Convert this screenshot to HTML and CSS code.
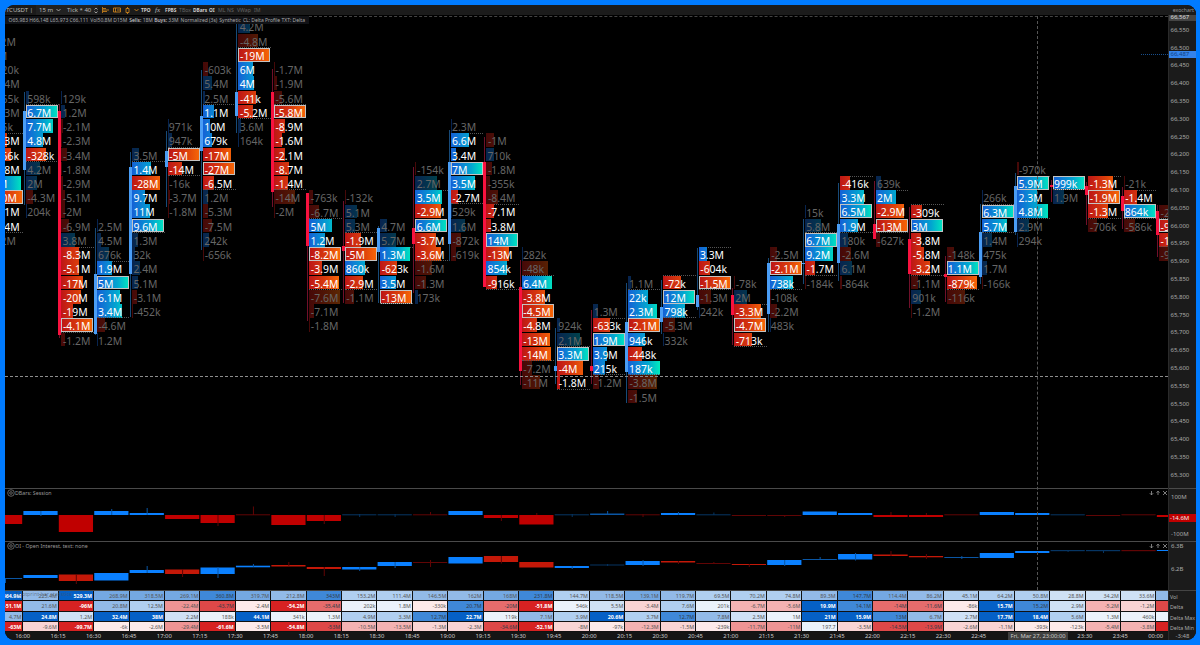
FILE: index.html
```
<!DOCTYPE html>
<html lang="en">
<head>
<meta charset="UTF-8">
<meta name="viewport" content="width=device-width, initial-scale=1.0">
<title>BTCUSDT Footprint</title>
<link rel="stylesheet" href="styles.css">
</head>
<body>
<div class="app">
    <!-- Toolbar -->
    <div class="toolbar">
        <span class="symbol">BTCUSDT |</span>
        <span class="drop">15 m <svg width="5" height="4" viewBox="0 0 5 4"><path d="M.5 1l2 2 2-2" /></svg></span>
        <span class="drop tick">Tick * 40 <svg width="4" height="7" viewBox="0 0 4 7"><path d="M.5 2.5L2 1l1.500 1.500M.5 4.500L2 6l1.500-1.500" /></svg></span>
        <span class="orange"><svg width="8" height="6" viewBox="0 0 8 6"><path d="M.5 0v6M1 1.500h3M1 3h6M1 4.500h4" /></svg></span>
        <span class="orange"><svg width="8" height="6" viewBox="0 0 8 6"><path d="M.5 1h7v4h-7zM2.500 1v4M4 3h3" /></svg></span>
        <span class="orange"><svg width="5" height="7" viewBox="0 0 5 7"><path d="M1 1.500h3v4H1zM2.500 0v1.500M2.500 5.500V7" /></svg></span>
        <span class="orange"><svg width="5" height="4" viewBox="0 0 5 4"><path d="M.5 1l2 2 2-2" /></svg></span>
        <b>TPO</b>
        <i>fx</i>
        <b>FPBS</b>
        <span class="off">TBox</span>
        <b>DBars</b>
        <b>OI</b>
        <span class="off">ML</span>
        <span class="off">NS</span>
        <span class="off">VWap</span>
        <span class="off">IM</span>
        <span class="brand">exochart</span>
    </div>

    <div class="workspace">
        <div class="plot">
            <!-- Footprint chart -->
            <div class="chart">
                <div class="columns" id="columns"></div>
                <div class="info">
                    <span>O65,983 H66,148 L65,973 C66,111</span>
                    <span>Vol50.8M D15M</span>
                    <span><b>Sells:</b> 18M <b>Buys:</b> 33M</span>
                    <span>Normalized (3s)</span>
                    <span>Synthetic</span>
                    <span>CL: Delta Profile TXT: Delta</span>
                </div>
                <div class="level"></div>
                <div class="last-line"></div>
            </div>

            <!-- Indicators -->
            <div class="panel dbars">
                <div class="panel-head">
                    <svg width="8" height="8" viewBox="0 0 8 8"><circle cx="4" cy="4" r="3.300" /><circle cx="4" cy="4" r="1.300" /></svg>
                    <span>DBars: Session</span>
                    <span class="tools"><svg width="18" height="6" viewBox="0 0 18 6"><path d="M2.500 1v4M.8 3.200l1.700 1.700 1.700-1.700M9 5V1M7.500 2.700L9 1.200l1.500 1.500M14 1l4 4M18 1l-4 4" /></svg></span>
                </div>
                <svg class="bars" id="dbars" viewBox="5 489 1163 52"></svg>
            </div>
            <div class="panel oi">
                <div class="panel-head">
                    <svg width="8" height="8" viewBox="0 0 8 8"><circle cx="4" cy="4" r="3.300" /><circle cx="4" cy="4" r="1.300" /></svg>
                    <span>OI - Open Interest, text: none</span>
                    <span class="tools"><svg width="18" height="6" viewBox="0 0 18 6"><path d="M2.500 1v4M.8 3.200l1.700 1.700 1.700-1.700M9 5V1M7.500 2.700L9 1.200l1.500 1.500M14 1l4 4M18 1l-4 4" /></svg></span>
                </div>
                <svg class="bars" id="oi" viewBox="5 542 1163 48"></svg>
            </div>

            <!-- Bar statistics -->
            <div class="stats" id="stats">
                <div class="stats-title">Footprint bar statistics</div>
            </div>
            <div class="times" id="times"></div>
            <div class="crosshair"></div>
            <div class="time-tag">Fri, Mar 27, 23:00:00</div>
        </div>

        <!-- Price axis -->
        <div class="axis">
            <div class="cursor-price">66,567</div>
            <div class="prices" id="prices"></div>
            <div class="last-price">66,487</div>
            <div class="scale scale-dbars">
                <span>100M</span>
                <span class="now">-14.6M</span>
                <span>-100M</span>
            </div>
            <div class="scale scale-oi">
                <span>6.3B</span>
                <span>6.2B</span>
            </div>
            <div class="stat-names">
                <span>Vol</span>
                <span>Delta</span>
                <span>Delta Max</span>
                <span>Delta Min</span>
            </div>
            <div class="countdown">-3:48</div>
        </div>
    </div>
</div>
<script src="script.js"></script>
</body>
</html>
```

FILE: styles.css
```
* {
    box-sizing: border-box;
}
body {
    margin: 0;
    height: 645px;
    padding: 5px 4px 5px 5px;
    background: #007bff;
    font-family: "Noto Sans", "Open Sans", sans-serif;
    overflow: hidden;
}
.app {
    width: 1191px;
    height: 635px;
    border-radius: 9px;
    background: #000;
    overflow: hidden;
    display: flex;
    flex-direction: column;
}
svg {
    fill: none;
    stroke: currentColor;
    stroke-width: 0.8;
    flex: none;
}

/* Toolbar */
.toolbar {
    height: 10px;
    flex: none;
    background: #1b1b1b;
    color: #bbb;
    font-size: 5.2px;
    line-height: 10px;
    white-space: nowrap;
    display: grid;
    grid-template-columns: 31px 27px 35px 11px 12px 9px 11px 14px 10px 14px 14px 16px 9px 9px 10px 17px 10px 1fr;
}
.toolbar > * {
    display: flex;
    align-items: center;
    gap: 3px;
}
.toolbar i {
    font-family: "Liberation Serif", serif;
    font-size: 7px;
}
.symbol {
    font-size: 6px;
    justify-content: flex-end;
    padding-right: 3px;
}
.drop {
    font-size: 6px;
    padding-left: 3px;
    background: #222;
}
.tick {
    padding-left: 4px;
}
.toolbar .orange {
    color: #d98a1c;
    padding-left: 4px;
}
.toolbar .off {
    color: #666;
}
.toolbar b {
    color: #ccc;
    font-size: 4.8px;
}
.toolbar .brand {
    justify-content: flex-end;
    padding-right: 2px;
    color: #999;
}

.workspace {
    display: flex;
    flex: 1;
    min-height: 0;
}
.plot {
    position: relative;
    width: 1163px;
    overflow: hidden;
}

/* Footprint */
.chart {
    position: relative;
    height: 473px;
    overflow: hidden;
}
.columns {
    display: flex;
    margin-left: -14.4px;
}
.column {
    position: relative;
    flex: 0 0 35.42px;
    padding-top: 4.4px;
}
.cell {
    position: relative;
    height: 14.24px;
    width: 32.5px;
    line-height: 17.6px;
    font-size: 10.4px;
    color: #666;
    white-space: nowrap;
}
.cell .bar {
    position: absolute;
    left: 0;
    top: 0;
    bottom: 0.6px;
    background-size: 32px 100%;
    background-repeat: no-repeat;
    opacity: 0.37;
}
.cell span {
    position: relative;
    padding-left: 1.2px;
}
.cell.neg span {
    padding-left: 1.6px;
}
.pos .bar {
    background-image: linear-gradient(90deg, #1560d6, #02a5d0 60%, #00edbd);
}
.neg .bar {
    background-image: linear-gradient(90deg, #bd1616, #d83a0c 50%, #fb6c06);
}
.value {
    color: #fff;
}
.value .bar {
    opacity: 1;
}
.poc .bar {
    border: 1px solid #c3c3c3;
}
.va-top::before, .va-bottom::after {
    content: "";
    position: absolute;
    left: 0;
    right: 0;
    top: -0.5px;
    border-top: 1px dotted #555;
}
.va-bottom::after {
    top: auto;
    bottom: 0;
}
.wick, .body {
    position: absolute;
    left: -2px;
    width: 1px;
    background: #174a78;
}
.body {
    left: -3px;
    width: 3px;
    background: #4a9df5;
}
.down .wick {
    background: #70102a;
}
.down .body {
    background: #f8123f;
}
.info {
    position: absolute;
    left: 0;
    top: 1px;
    width: 304px;
    height: 8px;
    padding: 0 4px 0 3.5px;
    display: flex;
    justify-content: space-between;
    background: #111216;
    color: #aaa;
    font-size: 5px;
    line-height: 8px;
    white-space: nowrap;
}
.info b {
    font-weight: 500;
    color: #ccc;
}
.level {
    position: absolute;
    left: 0;
    right: 0;
    top: 361px;
    border-top: 1px dashed #8d8d8d;
}
.last-line {
    position: absolute;
    right: 0;
    width: 27px;
    top: 39px;
    border-top: 1px dotted #184e8c;
}
.crosshair {
    position: absolute;
    left: 0;
    width: 1033px;
    top: 1px;
    height: 574px;
    border-right: 1px dashed #555;
    pointer-events: none;
}
.chart::after {
    content: "";
    position: absolute;
    left: 304px;
    right: 0;
    top: 1px;
    border-top: 1px dashed #444;
}

/* Indicator panels */
.panel {
    position: relative;
    border-top: 1px solid #4a4a4a;
}
.dbars {
    height: 53px;
}
.oi {
    height: 49px;
}
.panel-head {
    position: absolute;
    left: 2px;
    right: 1px;
    top: 0;
    display: flex;
    align-items: center;
    color: #777;
    font-size: 5.3px;
    line-height: 8px;
}
.panel-head span {
    color: #999;
}
.panel-head .tools {
    margin-left: auto;
}
.panel-head .tools svg {
    display: block;
}
.bars {
    display: block;
    width: 1163px;
    height: 100%;
    stroke: none;
}
.b { fill: #0a80ff; }
.m { fill: #0a56a4; }
.d { fill: #063563; }
.r { fill: #c00000; }
.e { fill: #610505; }
.oi .r { fill: #c41808; }

/* Statistics table */
.stats {
    position: relative;
    border-top: 1px solid #444;
    height: 42px;
}
.stats-title {
    position: absolute;
    z-index: 1;
    left: 11px;
    top: -1px;
    font-size: 5.3px;
    line-height: 9px;
    color: rgba(70, 80, 95, 0.6);
}
.stat-row {
    display: flex;
    height: 10.3px;
    margin-left: -17.1px;
    border-bottom: 1px solid #111;
}
.stat {
    flex: 0 0 35.42px;
    border-right: 1px solid #111;
    padding-right: 1px;
    text-align: right;
    font-size: 5.3px;
    line-height: 11.5px;
    color: #555;
    overflow: hidden;
}
.up0 { background: #ebf2fb; }
.up1 { background: #cfe1f5; }
.up2 { background: #b0cff0; }
.up3 { background: #92bae8; }
.up4 { background: #74a8e2; }
.up5 { background: #3f88d8; }
.up6 { background: #0560c6; }
.dn0 { background: #fdeaea; }
.dn1 { background: #f9d4d4; }
.dn2 { background: #f4b2b2; }
.dn3 { background: #ee9494; }
.dn4 { background: #e66c6c; }
.dn5 { background: #de4848; }
.dn6 { background: #d72222; }
.up5, .dn5, .dn4 { color: #333c48; }
.up6, .dn6 {
    color: #fff;
    font-weight: bold;
}
.times {
    display: flex;
    height: 8px;
    background: #151515;
    color: #ccc;
    font-size: 5.9px;
    line-height: 8px;
}
.times span {
    flex: 0 0 35.42px;
    text-align: center;
}
.time-tag {
    position: absolute;
    left: 1003px;
    bottom: 0;
    width: 60px;
    height: 8px;
    background: #3f3f3f;
    color: #ccc;
    font-size: 5.8px;
    line-height: 8px;
    text-align: center;
}

/* Price axis */
.axis {
    position: relative;
    flex: 1;
    background: #1b1b1b;
    color: #aaa;
    font-size: 6px;
    display: flex;
    flex-direction: column;
    border-left: 1px solid #2a2a2a;
    white-space: nowrap;
    overflow: hidden;
}
.cursor-price {
    height: 6px;
    flex: none;
    line-height: 5px;
    padding-left: 1.5px;
    background: #444;
    color: #ddd;
}
.prices {
    height: 467px;
    flex: none;
    padding-top: 0.8px;
}
.prices span {
    display: block;
    height: 17.8px;
    line-height: 17.8px;
    padding-left: 1.5px;
}
.last-price {
    position: absolute;
    left: 0;
    right: 0;
    top: 36px;
    height: 7px;
    line-height: 7px;
    padding-left: 1.5px;
    background: #3483ea;
    color: #123f80;
}
.scale {
    flex: none;
    border-top: 1px solid #4a4a4a;
    display: flex;
    flex-direction: column;
    line-height: 8px;
}
.scale span {
    padding-left: 2px;
}
.scale-dbars {
    height: 53px;
    padding: 4px 0 3px;
    justify-content: space-between;
}
.scale .now {
    position: relative;
    top: 2.5px;
    padding-left: 1px;
    background: #c00000;
    color: #eee;
}
.scale-oi {
    height: 49px;
    gap: 15px;
}
.stat-names {
    height: 42px;
    flex: none;
    border-top: 1px solid #444;
    display: flex;
    flex-direction: column;
    font-size: 5.3px;
    line-height: 10.3px;
    padding: 1px 0 0 1px;
}
.countdown {
    line-height: 8px;
    text-align: center;
}
```

FILE: script.js
```
const PITCH = 35.42;
const ROW = 14.24;

// first row | value area start, rows | candle: u/d wickTop wickBottom bodyTop bodyBottom | text:width (* marks the POC)
const footprint = [
    '1|8 7|u 15 15 15 15|4.2M:0 5M:0 -320k:0 -7.4M:0 -165k:0 -1.3M:0 -15k:0 -1.3M:16 -166k:20 -1.8M:5 5M:30 *-20M:32 -1.1M:3 -2.4M:3 4.2M:3',
    '5|6 4|u 92 205 111 170|598k:3 *6.7M:32 7.7M:27 4.8M:17 -328k:20 4.2M:14 2M:11 -4.3M:7 204k:.7',
    '5|16 6|d 104 338 111 335|129k:.7 1.2M:4 -2.1M:2 -2.3M:1 -3.4M:6 -1.8M:1 -2.9M:2 -5.1M:4 -2M:4 -6.9M:8 3.8M:14 -8.3M:18 -5.1M:18 -17M:22 -20M:20 -19M:12 *-4.1M:32 -1.2M:4',
    '14|17 4|u 228 335 274 334|2.5M:1 4.5M:4 676k:12 1.9M:15 *5M:32 6.1M:23 3.4M:25 -4.6M:8 1.2M:1',
    '9|10 5|u 152 317 167 274|3.5M:7 1.4M:19 -28M:28 9.7M:13 11M:18 *9.6M:32 1.3M:6 32k:3 2.4M:8 5.1M:6 -3.1M:5 -452k:1',
    '7|9 2|u 131 207 151 167|971k:.5 947k:4 *-5M:32 -14M:14 -16k:1 -3.7M:2 -1.8M:1',
    '3|6 6|u 70 250 116 151|-603k:5 5.4M:9 2.5M:2 1.1M:11 10M:7 679k:9 -17M:28 *-27M:32 -6.5M:11 1.2M:5 -5.3M:5 -7.5M:9 242k:6 -656k:.7',
    '0|2 5|u 22 133 92 116|4.2M:12 -4.8M:20 *-19M:32 6M:15 4M:16 -41k:18 -5.2M:15 3.6M:3 164k:.5',
    '3|6 6|d 69 207 92 192|-1.7M:1 -1.9M:3 -5.6M:8 *-5.8M:32 -8.9M:11 -1.6M:8 -2.1M:11 -8.7M:15 -1.4M:14 -14M:21 -2M:1',
    '12|14 5|d 193 321 193 246|-763k:4 -6.7M:10 5M:23 1.2M:16 *-8.2M:32 -3.9M:13 -5.4M:30 -7.6M:31 -7.1M:5 -1.8M:.5',
    '12|15 4|d 201 303 246 251|-132k:1.5 5.1M:12 5.3M:10 -1.9M:16 *-5M:32 860k:20 -2.9M:18 -1.1M:9',
    '14|16 4|u 226 303 228 252|4.7M:7 5.7M:16 1.3M:30 -623k:17 3.5M:16 *-13M:32',
    '10|12 5|d 167 293 228 244|-154k:.5 2.7M:22 3.5M:27 -2.9M:26 *6.6M:32 -3.7M:21 -3.6M:26 -1.6M:17 -1.3M:11 173k:3',
    '7|8 5|u 130 261 162 244|2.3M:1.5 6.6M:18 3.4M:5 *7M:32 3.5M:24 -2.7M:7 529k:1 1.6M:14 -872k:10 -619k:5',
    '8|13 6|d 137 287 162 287|-1M:8 710k:8 -1.8M:6 -355k:4 -8.4M:12 -7.1M:8 -3.8M:5 *14M:32 -13M:23 854k:21 -916k:11',
    '16|18 6|d 260 385 287 371|282k:.5 -48k:26 6.4M:30 -3.8M:23 *-4.5M:32 -4.8M:15 -13M:28 -14M:29 -7.2M:10 -11M:18',
    '21|23 3|u 328 384 366 371|924k:3 2.1M:23 *3.3M:32 -4M:26 -1.8M:3',
    '20|21 4|d 310 384 366 371|1.3M:5 -633k:17 *1.9M:32 3.9M:14 215k:12 -1.2M:6',
    '18|19 6|u 283 403 322 372|1.1M:3 22k:20 2.3M:29 *-2.1M:32 946k:17 -448k:14 187k:32 -3.8M:29 -1.5M:9',
    '18|18 3|u 280 334 307 322|-72k:18 *12M:32 798k:22 -5.3M:12 332k:.5',
    '16|16 3|u 248 310 295 307|3.3M:8 -604k:11 *-1.5M:32 -1.3M:12 242k:.5',
    '18|20 3|d 288 345 295 315|-78k:.5 2M:13 -3.3M:27 *-4.7M:32 -713k:18',
    '16|17 2|u 258 332 263 314|-2.5M:7 *-2.1M:32 738k:23 -108k:1.5 -2.2M:7 483k:1.5',
    '13|15 3|u 219 284 263 264|15k:.5 5.8M:16 *6.7M:32 9.2M:28 -1.7M:10 -184k:1',
    '11|11 4|u 183 281 224 263|-416k:10 3.3M:24 *6.5M:32 1.9M:18 180k:8 -2.6M:11 6.1M:12 -864k:2',
    '11|12 3|d 181 239 224 239|639k:5 2M:20 -2.9M:28 *-13M:32 -627k:4',
    '13|13 5|d 207 308 239 274|-309k:11 *3M:32 -3.8M:10 -5.8M:13 -3.2M:19 -1.1M:7 901k:10 -1.2M:1',
    '16|17 2|d 256 302 274 277|-148k:7 *1.1M:32 -879k:30 -116k:18',
    '12|13 2|u 204 284 232 277|266k:.5 *6.3M:32 5.7M:25 1.4M:10 475k:.5 1.7M:5 -166k:.7',
    '10|11 3|u 173 235 186 232|-970k:2 *5.9M:32 2.3M:20 4.8M:31 2.9M:12 294k:.7',
    '11|11 1|d 180 202 185 187|*999k:32 1.9M:11',
    '11|11 3|d 182 225 186 195|-1.3M:25 *-1.9M:32 -1.3M:20 -706k:9',
    '11|12 2|d 187 229 196 211|-21k:.5 -1.4M:13 *864k:32 -586k:11',
    '13|14 2|d 205 257 211 235|-2.2M:20 *-9.1M:32 -1.2M:20 -9.4M:20'
];

let html = '';
footprint.forEach(line => {
    const [first, area, candle, cells] = line.split('|');
    const [vaStart, vaRows] = area.split(' ').map(Number);
    const [dir, wt, wb, bt, bb] = candle.split(' ');
    html += `<div class="column ${dir === 'd' ? 'down' : ''}"><div style="height:${first * ROW}px"></div>`;
    cells.split(' ').forEach((cell, i) => {
        const row = Number(first) + i;
        const poc = cell[0] === '*';
        const [text, width] = cell.replace('*', '').split(':');
        let cls = text[0] === '-' ? 'cell neg' : 'cell pos';
        if (row >= vaStart && row < vaStart + vaRows) cls += ' value';
        if (row === vaStart) cls += ' va-top';
        if (row === vaStart + vaRows - 1) cls += ' va-bottom';
        if (poc) cls += ' poc';
        html += `<div class="${cls}"><div class="bar" style="width:${width}px"></div><span>${text}</span></div>`;
    });
    html += `<div class="wick" style="top:${wt - 15}px;height:${wb - wt}px"></div>`;
    html += `<div class="body" style="top:${bt - 15}px;height:${bb - bt}px"></div></div>`;
});
document.getElementById('columns').innerHTML = html;

// colour, top, bottom, wick top, wick bottom
const dbars = 'r515,524 b511,515,511,516 r515,532 b511,515,509,515 b513,515,508,515 r515,519 r515,523,515,526 e514.3,515.3,506.5,515 r515,525 r515,521,515,524 d514.3,515.3,514,517 d514.3,515.3,514,517 e514.3,515.3,512,515 b511,515 r515,518,515,521 r515,524.5,513,515 d514.3,515.3,514,517 m513.5,515,511,515 e514.3,515.3,514,517 b513,515,512,515 d514.3,515.3,512.5,515 e515,516 e515,516,515,517 b511.5,515 b513,515 r515,517,512,515 r515,517,513,515 e514.3,515.3 b512,515 b513,515 d514.3,515.3 e515,516 e514.3,515.3 r515,517';
const oi = 'm578,579,578,583 b575,578 r574.5,581,574,584 b573,580.5 b570,573,566,573 r569.5,574,569,577 b567.5,574,567,578 b565.7,567.3,564,567 r565,566.5,562,566 r567,569,567,576 b567,569.5,567,571 b562,566,562,568 e562,563,560,567 b557,563.5 r556,562,556,563.5 r562,567.5 b566,568,566,569 d564.5,565.5,564,566 b561,565,560,566 r561,562.5,561,564 e563,564,562,564 r564,565,564,567 b560,565,560,566 m559,560,557,560 b554,559.5,553,560.5 r554.5,556,551,556 r556,557.3,554,559 m557,558,556,559 b553,558 b551,553 d550,551.2,550,552 d550,551.2,550,553 e550,551.2 b550,551';

function drawBars(id, data) {
    let out = '';
    data.split(' ').forEach((bar, i) => {
        const c = bar[0];
        const [top, bottom, w1, w2] = bar.slice(1).split(',').map(Number);
        const x = 23.4 + PITCH * (i - 1);
        out += `<rect class="${c}" x="${x}" y="${top}" width="34.2" height="${bottom - top}"/>`;
        if (w1) {
            const wc = c === 'b' ? 'm' : c === 'r' ? 'e' : c;
            out += `<rect class="${wc}" x="${x + 17}" y="${w1}" width="1" height="${w2 - w1}"/>`;
        }
    });
    document.getElementById(id).innerHTML = out;
}
drawBars('dbars', dbars);
drawBars('oi', oi);

// text/shade
const stats = [
    '364.9M/6 225.4M/3 529.3M/6 268.9M/4 318.5M/4 269.1M/4 360.8M/5 319.7M/4 212.8M/3 343M/5 153.2M/2 111.4M/2 146.5M/3 162M/3 168M/4 231.8M/5 144.7M/2 118.5M/3 139.1M/4 119.7M/3 69.5M/2 70.2M/2 74.8M/2 89.3M/3 147.7M/5 114.4M/4 86.2M/3 45.1M/2 64.2M/2 50.8M/2 28.8M/1 34.2M/1 33.6M/1 ×/3',
    '-51.1M/6 21.6M/3 -96M/6 20.8M/3 12.5M/2 -22.4M/3 -43.7M/5 -2.4M/0 -54.2M/6 -35.4M/4 202k/0 1.8M/0 -330k/0 20.7M/5 -20M/4 -51.8M/6 546k/0 5.5M/1 -3.4M/1 7.6M/2 201k/0 -6.7M/2 -5.6M/2 19.9M/6 14.1M/5 -14M/4 -11.6M/4 -86k/0 15.7M/6 15.2M/5 2.9M/1 -5.2M/2 -1.2M/1 -/5',
    '4.7M/3 24.8M/6 1.2M/1 32.4M/6 38M/6 2.2M/1 188k/0 44.1M/6 341k/0 1.3M/0 4.9M/2 3.3M/2 12.7M/5 22.7M/6 119k/0 7.1M/3 3.9M/2 20.6M/6 3.7M/2 12.7M/5 7.8M/3 2.5M/1 1M/0 21M/6 15.9M/6 13M/5 6.7M/3 2.7M/1 17.7M/6 18.4M/6 5.6M/2 1.3M/0 460k/0 /0',
    '-63M/6 -9.6M/1 -99.7M/6 -6k/0 -2.6M/0 -29.4M/3 -61.6M/6 -3.5M/0 -54.8M/6 -53M/5 -10.5M/2 -13.5M/2 -1.3M/1 -2.3M/1 -34.6M/5 -52.1M/6 -8M/1 -97k/0 -12.3M/2 -1.5M/1 -239k/0 -11.7M/3 -11M/3 197.7/0 -3.5M/1 -14.5M/5 -13.9M/5 -2.6M/1 -1.1M/1 -393k/0 -123k/0 -5.4M/2 -3.8M/2 -/6'
];
stats.forEach(line => {
    const row = document.createElement('div');
    row.className = 'stat-row';
    line.split(' ').forEach(cell => {
        const [text, shade] = cell.split('/');
        const cls = (text[0] === '-' ? 'dn' : 'up') + shade;
        row.innerHTML += `<div class="stat ${cls}">${text === '-' ? '' : text}</div>`;
    });
    document.getElementById('stats').appendChild(row);
});

let times = '';
for (let i = 0; i < 33; i++) {
    const h = (16 + Math.floor(i / 4)) % 24;
    const label = String(h).padStart(2, '0') + ':' + String((i % 4) * 15).padStart(2, '0');
    // 23:00 and 23:15 are under the cursor time tag
    times += `<span>${i === 28 || i === 29 ? '' : label}</span>`;
}
document.getElementById('times').innerHTML = times;

let prices = '';
for (let p = 66550; p >= 65300; p -= 50) {
    prices += `<span>${p.toLocaleString('en-US')}</span>`;
}
document.getElementById('prices').innerHTML = prices;
```
